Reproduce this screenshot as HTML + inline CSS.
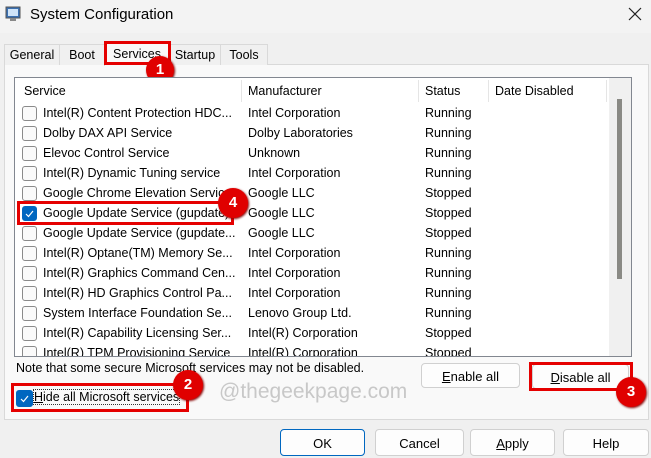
<!DOCTYPE html><html><head><style>
body{margin:0;width:651px;height:458px;background:#f0f0f0;font-family:"Liberation Sans",sans-serif;font-size:12.5px;color:#000;position:relative;overflow:hidden}
.a{position:absolute}
.tb{left:0;top:0;width:651px;height:33px;background:#f3f3f3}
.tab{position:absolute;top:44px;height:20px;line-height:20px;text-align:center;border:1px solid #d9d9d9;border-bottom:none;background:#f0f0f0}
.panel{left:4px;top:64px;width:643px;height:354px;background:#f9f9f9;border:1px solid #d9d9d9}
.list{left:14px;top:77px;width:616px;height:278px;background:#fff;border:1px solid #828790;overflow:hidden}
.hd{position:absolute;top:2px;height:22px;line-height:22px;padding-left:6px;border-right:1px solid #e5e5e5;box-sizing:border-box}
.row{position:absolute;left:0;height:20px;line-height:20px;width:600px}
.row span{position:absolute;white-space:nowrap}
.cb{position:absolute;left:7px;top:3px;width:13px;height:13px;border:1px solid #8a8a8a;border-radius:3px;background:#fafafa}
.cbc{background:#0067c0;border-color:#0067c0}
.btn{position:absolute;height:25px;line-height:25px;text-align:center;background:#fdfdfd;border:1px solid #d0d0d0;border-radius:4px;box-sizing:border-box;font-size:13px}
.red{position:absolute;border:3px solid #e50000;box-sizing:border-box}
.num{position:absolute;width:30px;height:30px;border-radius:50%;background:#e00000;color:#fff;font-weight:bold;font-size:15px;line-height:30px;text-align:center;box-shadow:1px 1px 2px #800}
</style></head><body>
<div class="a tb"></div>
<svg class="a" style="left:5px;top:5px" width="18" height="18"><rect x="1" y="2" width="14" height="11" fill="#3a6fb0" stroke="#555"/><rect x="3" y="4" width="10" height="7" fill="#cfe3f7"/><rect x="5" y="13" width="6" height="3" fill="#888"/></svg>
<div class="a" style="left:30px;top:6px;font-size:15px">System Configuration</div>
<svg class="a" style="left:628px;top:7px" width="14" height="14"><path d="M1 1L13 13M13 1L1 13" stroke="#222" stroke-width="1.2"/></svg>
<div class="a panel"></div>
<div class="tab" style="left:4px;width:54px">General</div>
<div class="tab" style="left:59px;width:44px">Boot</div>
<div class="tab" style="left:104px;width:64px;top:41px;height:24px;background:#f9f9f9;line-height:24px">Services</div>
<div class="tab" style="left:169px;width:50px">Startup</div>
<div class="tab" style="left:220px;width:46px">Tools</div>
<div class="red" style="left:104px;top:41px;width:67px;height:24px"></div>
<div class="num" style="left:146px;top:56px;width:28px;height:28px;line-height:28px">1</div>
<div class="a list">
<div class="hd" style="left:3px;width:224px">Service</div>
<div class="hd" style="left:227px;width:177px">Manufacturer</div>
<div class="hd" style="left:404px;width:70px">Status</div>
<div class="hd" style="left:474px;width:118px">Date Disabled</div>
<div class="a" style="left:594px;top:0;width:22px;height:280px;background:#f0f0f0"></div>
<div class="a" style="left:602px;top:21px;width:5px;height:180px;background:#8a8a85"></div>
<div class="row" style="top:25px"><div class="cb"></div><span style="left:28px">Intel(R) Content Protection HDC...</span><span style="left:233px">Intel Corporation</span><span style="left:410px">Running</span></div>
<div class="row" style="top:45px"><div class="cb"></div><span style="left:28px">Dolby DAX API Service</span><span style="left:233px">Dolby Laboratories</span><span style="left:410px">Running</span></div>
<div class="row" style="top:65px"><div class="cb"></div><span style="left:28px">Elevoc Control Service</span><span style="left:233px">Unknown</span><span style="left:410px">Running</span></div>
<div class="row" style="top:85px"><div class="cb"></div><span style="left:28px">Intel(R) Dynamic Tuning service</span><span style="left:233px">Intel Corporation</span><span style="left:410px">Running</span></div>
<div class="row" style="top:105px"><div class="cb"></div><span style="left:28px">Google Chrome Elevation Service</span><span style="left:233px">Google LLC</span><span style="left:410px">Stopped</span></div>
<div class="row" style="top:125px"><div class="cb cbc"><svg width="13" height="13" style="position:absolute;left:0;top:0"><path d="M3 7L5.5 9.5L10 4" stroke="#fff" fill="none" stroke-width="1.2"/></svg></div><span style="left:28px">Google Update Service (gupdate)</span><span style="left:233px">Google LLC</span><span style="left:410px">Stopped</span></div>
<div class="row" style="top:145px"><div class="cb"></div><span style="left:28px">Google Update Service (gupdate...</span><span style="left:233px">Google LLC</span><span style="left:410px">Stopped</span></div>
<div class="row" style="top:165px"><div class="cb"></div><span style="left:28px">Intel(R) Optane(TM) Memory Se...</span><span style="left:233px">Intel Corporation</span><span style="left:410px">Running</span></div>
<div class="row" style="top:185px"><div class="cb"></div><span style="left:28px">Intel(R) Graphics Command Cen...</span><span style="left:233px">Intel Corporation</span><span style="left:410px">Running</span></div>
<div class="row" style="top:205px"><div class="cb"></div><span style="left:28px">Intel(R) HD Graphics Control Pa...</span><span style="left:233px">Intel Corporation</span><span style="left:410px">Running</span></div>
<div class="row" style="top:225px"><div class="cb"></div><span style="left:28px">System Interface Foundation Se...</span><span style="left:233px">Lenovo Group Ltd.</span><span style="left:410px">Running</span></div>
<div class="row" style="top:245px"><div class="cb"></div><span style="left:28px">Intel(R) Capability Licensing Ser...</span><span style="left:233px">Intel(R) Corporation</span><span style="left:410px">Stopped</span></div>
<div class="row" style="top:265px"><div class="cb"></div><span style="left:28px">Intel(R) TPM Provisioning Service</span><span style="left:233px">Intel(R) Corporation</span><span style="left:410px">Stopped</span></div>
</div>
<div class="red" style="left:17px;top:201px;width:217px;height:24px"></div>
<div class="num" style="left:218px;top:188px">4</div>
<div class="a" style="left:16px;top:361px">Note that some secure Microsoft services may not be disabled.</div>
<div class="btn" style="left:421px;top:363px;width:99px"><u>E</u>nable all</div>
<div class="btn" style="left:532px;top:364px;width:97px"><u>D</u>isable all</div>
<div class="red" style="left:529px;top:362px;width:104px;height:29px"></div>
<div class="num" style="left:616px;top:377px">3</div>
<div class="cb cbc" style="left:16px;top:390px;width:15px;height:15px"><svg width="15" height="15" style="position:absolute;left:0;top:0"><path d="M4 8L6.5 10.5L11 5" stroke="#fff" fill="none" stroke-width="1.2"/></svg></div>
<div class="a" style="left:34px;top:390px;outline:1px dotted #333">
<u>H</u>ide all Microsoft services</div>
<div class="red" style="left:11px;top:383px;width:178px;height:29px"></div>
<div class="num" style="left:173px;top:370px">2</div>
<div class="a" style="left:219px;top:380px;font-size:21px;color:#c8c8c8">@thegeekpage.com</div>
<div class="btn" style="left:280px;top:429px;width:85px;height:27px;line-height:27px;border:1px solid #0067c0">OK</div>
<div class="btn" style="left:375px;top:429px;width:89px;height:27px;line-height:27px">Cancel</div>
<div class="btn" style="left:470px;top:429px;width:85px;height:27px;line-height:27px"><u>A</u>pply</div>
<div class="btn" style="left:563px;top:429px;width:86px;height:27px;line-height:27px">Help</div>
</body></html>
